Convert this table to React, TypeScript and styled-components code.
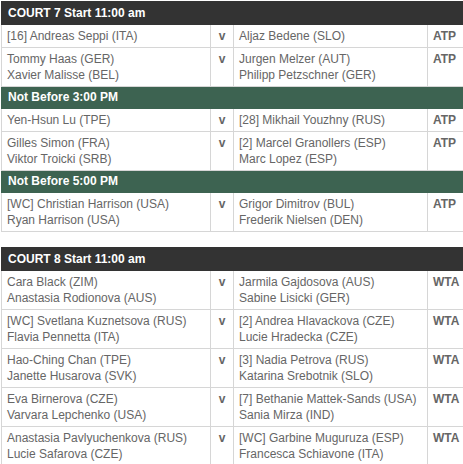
import React from "react";
import styled, { createGlobalStyle } from "styled-components";

const Global = createGlobalStyle`
  html, body { margin: 0; padding: 0; background: #fff; overflow: hidden; }
  body { font-family: "Liberation Sans", Arial, sans-serif; }
`;

const Page = styled.div`
  width: 463px;
  overflow: hidden;
  padding: 1px 0 0 1px;
  display: flex;
  flex-direction: column;
  gap: 15px;
`;

const Table = styled.table`
  width: 490px;
  border-collapse: collapse;
  table-layout: fixed;
  font-size: 12px;
  line-height: 16px;
  color: #666;
`;

const CourtHead = styled.th`
  background: #333;
  color: #fff;
  font-weight: bold;
  text-align: left;
  padding: 3px 6px;
  border: 1px solid #333;
`;

const Band = styled.td`
  background: #3d6351;
  color: #fff;
  font-weight: bold;
  padding: 2px 6px 3px;
  border: 1px solid #3d6351;
`;

const Cell = styled.td<{ $bold?: boolean; $center?: boolean }>`
  border: 1px solid #d6d6d6;
  padding: 3px 5px;
  vertical-align: top;
  font-weight: ${(p) => (p.$bold ? "bold" : "normal")};
  text-align: ${(p) => (p.$center ? "center" : "left")};
  white-space: nowrap;
`;

type Match = { kind: "match"; a: string[]; b: string[]; tour: string } | { kind: "band"; text: string };

const court7: Match[] = [
  { kind: "match", a: ["[16] Andreas Seppi (ITA)"], b: ["Aljaz Bedene (SLO)"], tour: "ATP" },
  { kind: "match", a: ["Tommy Haas (GER)", "Xavier Malisse (BEL)"], b: ["Jurgen Melzer (AUT)", "Philipp Petzschner (GER)"], tour: "ATP" },
  { kind: "band", text: "Not Before 3:00 PM" },
  { kind: "match", a: ["Yen-Hsun Lu (TPE)"], b: ["[28] Mikhail Youzhny (RUS)"], tour: "ATP" },
  { kind: "match", a: ["Gilles Simon (FRA)", "Viktor Troicki (SRB)"], b: ["[2] Marcel Granollers (ESP)", "Marc Lopez (ESP)"], tour: "ATP" },
  { kind: "band", text: "Not Before 5:00 PM" },
  { kind: "match", a: ["[WC] Christian Harrison (USA)", "Ryan Harrison (USA)"], b: ["Grigor Dimitrov (BUL)", "Frederik Nielsen (DEN)"], tour: "ATP" },
];

const court8: Match[] = [
  { kind: "match", a: ["Cara Black (ZIM)", "Anastasia Rodionova (AUS)"], b: ["Jarmila Gajdosova (AUS)", "Sabine Lisicki (GER)"], tour: "WTA" },
  { kind: "match", a: ["[WC] Svetlana Kuznetsova (RUS)", "Flavia Pennetta (ITA)"], b: ["[2] Andrea Hlavackova (CZE)", "Lucie Hradecka (CZE)"], tour: "WTA" },
  { kind: "match", a: ["Hao-Ching Chan (TPE)", "Janette Husarova (SVK)"], b: ["[3] Nadia Petrova (RUS)", "Katarina Srebotnik (SLO)"], tour: "WTA" },
  { kind: "match", a: ["Eva Birnerova (CZE)", "Varvara Lepchenko (USA)"], b: ["[7] Bethanie Mattek-Sands (USA)", "Sania Mirza (IND)"], tour: "WTA" },
  { kind: "match", a: ["Anastasia Pavlyuchenkova (RUS)", "Lucie Safarova (CZE)"], b: ["[WC] Garbine Muguruza (ESP)", "Francesca Schiavone (ITA)"], tour: "WTA" },
];

const Names = ({ list }: { list: string[] }) => (
  <>
    {list.map((n, i) => (
      <React.Fragment key={i}>
        {i > 0 && <br />}
        {n}
      </React.Fragment>
    ))}
  </>
);

const Court = ({ title, rows }: { title: string; rows: Match[] }) => (
  <Table>
    <colgroup>
      <col style={{ width: 209 }} />
      <col style={{ width: 23 }} />
      <col style={{ width: 194 }} />
      <col />
    </colgroup>
    <thead>
      <tr>
        <CourtHead colSpan={4}>{title}</CourtHead>
      </tr>
    </thead>
    <tbody>
      {rows.map((r, i) =>
        r.kind === "band" ? (
          <tr key={i}>
            <Band colSpan={4}>{r.text}</Band>
          </tr>
        ) : (
          <tr key={i}>
            <Cell><Names list={r.a} /></Cell>
            <Cell $bold $center>v</Cell>
            <Cell><Names list={r.b} /></Cell>
            <Cell $bold>{r.tour}</Cell>
          </tr>
        )
      )}
    </tbody>
  </Table>
);

export default function App() {
  return (
    <>
      <Global />
      <Page>
        <Court title="COURT 7 Start 11:00 am" rows={court7} />
        <Court title="COURT 8 Start 11:00 am" rows={court8} />
      </Page>
    </>
  );
}
